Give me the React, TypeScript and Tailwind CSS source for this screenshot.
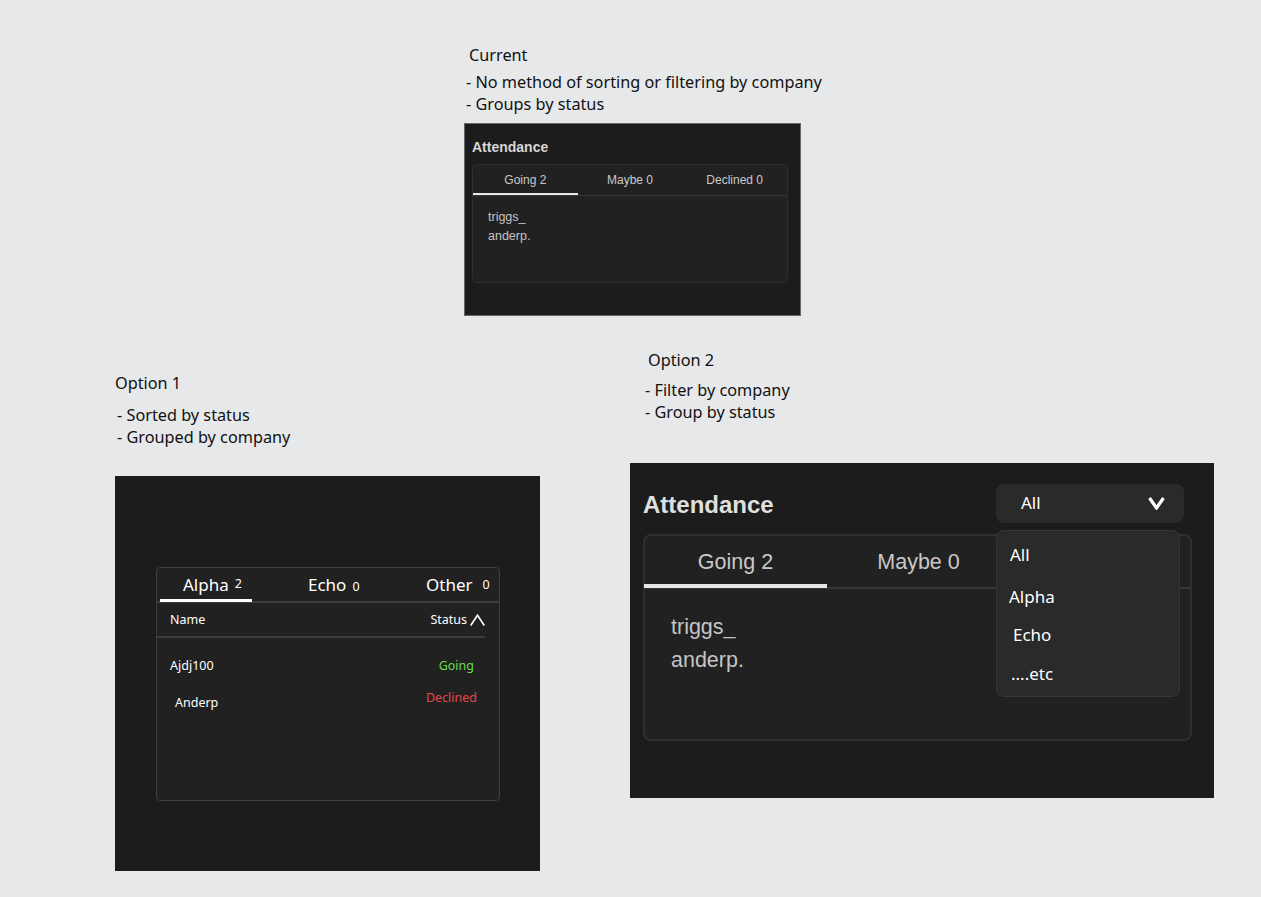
const note = "font-['Noto_Sans',sans-serif] text-[#111] text-[16.25px] leading-[22px]";
const arial = "font-['Liberation_Sans',Arial,sans-serif]";

function Current() {
  return (
    <div className="absolute left-[464px] top-[44px] w-[370px]">
      <p className={`${note} pl-[5px] h-[27px]`}>Current</p>
      <p className={`${note} pl-[2px]`}>- No method of sorting or filtering by company</p>
      <p className={`${note} pl-[2px]`}>- Groups by status</p>
      <div className={`${arial} mt-[8px] w-[337px] h-[193px] bg-[#1c1c1c] border border-[#666] pt-[15px] pl-[7px]`}>
        <h3 className="text-[14px] leading-[16px] font-bold text-[#d6d6d6]">Attendance</h3>
        <div className="mt-[9px] w-[316px] h-[119px] rounded-[5px] border border-[#2e2e2e] bg-[#212121]">
          <div className="flex h-[31px] border-b border-[#363636] text-[12px] text-[#c9c9c9]">
            <div className="w-[105px] h-[30px] pt-[1px] border-b-2 border-[#e8e8e8] flex items-center justify-center">Going 2</div>
            <div className="w-[105px] flex items-center justify-center">Maybe 0</div>
            <div className="w-[105px] flex items-center justify-center">Declined 0</div>
          </div>
          <div className="pl-[15px] pt-[12px] text-[12.5px] leading-[19px] text-[#c4c4c4]">
            <p>triggs_</p>
            <p>anderp.</p>
          </div>
        </div>
      </div>
    </div>
  );
}

function OptionOne() {
  return (
    <div className="absolute left-[115px] top-[372px] w-[426px]">
      <p className={`${note} h-[32px]`}>Option 1</p>
      <p className={`${note} pl-[2px]`}>- Sorted by status</p>
      <p className={`${note} pl-[2px]`}>- Grouped by company</p>
      <div className="mt-[28px] w-[425px] h-[395px] bg-[#1c1c1c] pt-[91px] pl-[41px] font-['Noto_Sans',sans-serif]">
        <div className="w-[344px] h-[234px] rounded-[4px] border border-[#3d3d3d] bg-[#212121] text-white">
          <div className="flex h-[35px] border-b-2 border-[#3d3d3d] text-[17px]">
            <div className="ml-[3px] w-[92px] h-[34px] border-b-[3px] border-white pl-[23px] leading-[33px]">
              Alpha<span className="relative -top-[3px] ml-[6px] text-[12.5px]">2</span>
            </div>
            <div className="ml-[56px] w-[64px] leading-[33px]">
              Echo<span className="ml-[6px] text-[12.5px]">0</span>
            </div>
            <div className="ml-[54px] leading-[33px]">
              Other<span className="relative -top-[2px] ml-[10px] text-[12.5px]">0</span>
            </div>
          </div>
          <div className="flex justify-between items-center w-[328px] h-[35px] pl-[13px] pt-[1px] border-b-2 border-[#3d3d3d] text-[12.5px]">
            <span>Name</span>
            <span className="flex items-center gap-[3px]">
              Status
              <svg width="15" height="12" viewBox="0 0 15 12" fill="none" stroke="#fff" strokeWidth="1.6">
                <path d="M0.7 11.5 L7.5 1.2 L14.3 11.5" />
              </svg>
            </span>
          </div>
          <div className="flex justify-between pl-[13px] pr-[25px] pt-[19px] text-[12.5px] leading-[18px]">
            <span>Ajdj100</span>
            <span className="text-[#6bdc4e]">Going</span>
          </div>
          <div className="flex justify-between pl-[18px] pr-[22px] pt-[14px] text-[12.5px] leading-[18px]">
            <span className="mt-[5px]">Anderp</span>
            <span className="text-[#e54848]">Declined</span>
          </div>
        </div>
      </div>
    </div>
  );
}

function OptionTwo() {
  return (
    <div className="absolute left-[630px] top-[349px] w-[584px]">
      <p className={`${note} pl-[18px] h-[30px]`}>Option 2</p>
      <p className={`${note} pl-[15px]`}>- Filter by company</p>
      <p className={`${note} pl-[15px]`}>- Group by status</p>
      <div className="relative mt-[40px] w-[584px] h-[335px] bg-[#1c1c1c] pl-[13px] pt-[20px]">
        <div className="flex items-center h-[40px] w-[541px] justify-between">
          <h3 className={`${arial} pt-[3px] text-[24px] font-bold text-[#e0e0e0]`}>Attendance</h3>
          <div className="flex items-center justify-between w-[188px] h-[39px] rounded-[8px] bg-[#2a2a2a] pl-[25px] pr-[19px] font-['Noto_Sans',sans-serif] text-[17px] text-white">
            All
            <svg width="17" height="14" viewBox="0 0 17 14" fill="none" stroke="#fff" strokeWidth="3.2">
              <path d="M1.5 2 L8.5 12 L15.5 2" />
            </svg>
          </div>
        </div>
        <div className={`${arial} mt-[11px] w-[549px] h-[207px] rounded-[8px] border-2 border-[#2f2f2f] bg-[#212121]`}>
          <div className="flex h-[53px] border-b-2 border-[#363636] text-[21.5px] text-[#c9c9c9]">
            <div className="-ml-px w-[183px] h-[52px] pt-[4px] border-b-4 border-[#e6e6e6] flex items-center justify-center">Going 2</div>
            <div className="w-[183px] pt-[1px] flex items-center justify-center">Maybe 0</div>
          </div>
          <div className="pl-[26px] pt-[22px] text-[21.5px] leading-[33px] text-[#c4c4c4]">
            <p>triggs_</p>
            <p>anderp.</p>
          </div>
        </div>
        {/* open dropdown */}
        <div className="absolute left-[366px] top-[67px] w-[184px] h-[167px] rounded-[8px] border border-[#363636] bg-[#2a2a2a] pl-[12px] pt-[9px] font-['Noto_Sans',sans-serif] text-[17px] leading-[30px] text-white">
          <p className="h-[42px] pl-[1px]">All</p>
          <p className="h-[38px]">Alpha</p>
          <p className="h-[39px] pl-[4px]">Echo</p>
          <p className="pl-[2px]">....etc</p>
        </div>
      </div>
    </div>
  );
}

export default function App() {
  return (
    <div className="relative w-[1261px] h-[897px] overflow-hidden bg-[#e7e8ea]">
      <Current />
      <OptionOne />
      <OptionTwo />
    </div>
  );
}
